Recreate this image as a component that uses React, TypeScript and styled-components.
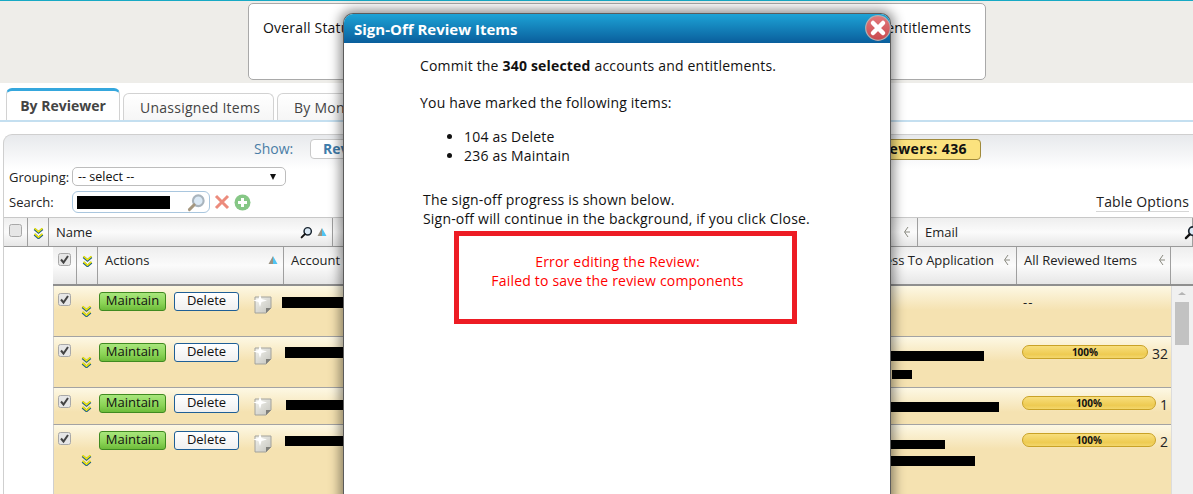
import * as React from 'react'
import styled, { createGlobalStyle } from 'styled-components'

const font = `'Open Sans', 'DejaVu Sans', sans-serif`

const GlobalStyle = createGlobalStyle`
  html, body {
    margin: 0;
    padding: 0;
    background: #fff;
  }
  body {
    font-family: ${font};
    font-size: 13px;
    color: #111;
  }
  svg {
    display: block;
  }
`

const Page = styled.div`
  position: relative;
  width: 1193px;
  height: 494px;
  overflow: hidden;
  background: #fff;
`

const TopBand = styled.div`
  height: 83px;
  box-sizing: border-box;
  padding: 3px 207px 0 248px;
  background: #eeede9;
  border-top: 1px solid #17a9c4;
`

const StatsBox = styled.div`
  display: flex;
  justify-content: space-between;
  box-sizing: border-box;
  height: 77px;
  margin-top: -1px;
  padding: 14px 14px 0 14px;
  background: #fff;
  border: 1px solid #a9a9a9;
  border-radius: 5px;
  font-size: 14px;
  letter-spacing: 0.2px;
`

const TabBar = styled.div`
  display: flex;
  align-items: flex-end;
  gap: 3px;
  height: 39px;
  box-sizing: border-box;
  padding-left: 6px;
  border-bottom: 2px solid #c4dff0;
`

const Tab = styled.div<{ $active?: boolean; $width: number }>`
  box-sizing: border-box;
  width: ${p => p.$width}px;
  height: ${p => (p.$active ? 32 : 27)}px;
  padding-top: ${p => (p.$active ? 5 : 4)}px;
  text-align: ${p => (p.$active ? 'center' : 'left')};
  padding-left: ${p => (p.$active ? 0 : 16)}px;
  font-size: 14px;
  font-weight: ${p => (p.$active ? 700 : 400)};
  letter-spacing: ${p => (p.$active ? 0 : 0.25)}px;
  color: #444;
  white-space: nowrap;
  background: ${p => (p.$active ? '#fff' : 'linear-gradient(#fff, #f6f6f6)')};
  border: 1px solid #d2d2d2;
  border-bottom: 0;
  border-top: ${p => (p.$active ? '3px solid #35a7dd' : '1px solid #d2d2d2')};
  border-radius: 6px 6px 0 0;
`

const Panel = styled.div`
  margin: 12px 0 0 3px;
  border-left: 1px solid #cfcfcf;
  border-top: 1px solid #cfcfcf;
  border-top-left-radius: 9px;
  background: linear-gradient(#e7e9ec 0, #fff 34px);
  height: 400px;
`

const ShowRow = styled.div`
  display: flex;
  align-items: center;
  height: 20px;
  padding: 4px 212px 0 250px;
`

const ShowLabel = styled.span`
  width: 56px;
  margin-top: -1px;
  font-size: 14px;
  color: #4a7da6;
`

const ShowButton = styled.div`
  box-sizing: border-box;
  width: 120px;
  height: 20px;
  padding-left: 12px;
  font-size: 14px;
  font-weight: 700;
  line-height: 18px;
  color: #3f7cab;
  background: #fff;
  border: 1px solid #c9c9c9;
  border-radius: 4px;
`

const Badge = styled.div`
  margin-left: auto;
  box-sizing: border-box;
  height: 21px;
  padding: 0 13px 0 10px;
  font-size: 14px;
  font-weight: 700;
  letter-spacing: 0.4px;
  line-height: 18px;
  background: #fbe27e;
  border: 1px solid #a08a3c;
  border-radius: 4px;
`

const FilterRow = styled.div<{ $top: number }>`
  display: flex;
  align-items: center;
  margin-top: ${p => p.$top}px;
  padding-left: 5px;
`

const FilterLabel = styled.span`
  width: 63px;
  font-size: 13px;
  color: #222;
`

const SelectBox = styled.div`
  display: flex;
  align-items: center;
  justify-content: space-between;
  box-sizing: border-box;
  width: 214px;
  height: 19px;
  padding: 0 5px;
  font-size: 12.5px;
  background: #fff;
  border: 1px solid #bdbdbd;
  border-radius: 5px;
`

const Caret = styled.span`
  width: 0;
  height: 0;
  margin-right: 4px;
  border-left: 3px solid transparent;
  border-right: 3px solid transparent;
  border-top: 6px solid #111;
`

const SearchBox = styled.div`
  display: flex;
  align-items: center;
  justify-content: space-between;
  box-sizing: border-box;
  width: 138px;
  height: 22px;
  padding: 0 3px 0 4px;
  background: #fff;
  border: 1px solid #a9c6de;
  border-radius: 6px;
`

const Redact = styled.div<{ $w: number; $h: number; $left?: number; $top?: number }>`
  width: ${p => p.$w}px;
  height: ${p => p.$h}px;
  margin-left: ${p => p.$left ?? 0}px;
  margin-top: ${p => p.$top ?? 0}px;
  background: #000;
`

const FilterIcons = styled.div`
  display: flex;
  align-items: center;
  gap: 4px;
  margin-left: 4px;
`

const TableOptions = styled.span`
  margin-left: auto;
  margin-right: 4px;
  font-size: 14px;
  letter-spacing: 0.15px;
  color: #222;
  border-bottom: 1px solid #d6d6d6;
`

const headGradient = 'linear-gradient(#eeeeee 0, #fbfbfb 50%, #e6e6e6 100%)'

const OuterHead = styled.div`
  display: grid;
  grid-template-columns: 24px 21px 284px 585px 1fr;
  height: 30px;
  margin-top: 4px;
  box-sizing: border-box;
  background: ${headGradient};
  border-top: 1px solid #c8c8c8;
  border-bottom: 1px solid #9a9a9a;
`

const InnerWrap = styled.div`
  margin-left: 49px;
`

const grid = '24px 21px 186px 596px 137px 154px 22px'

const InnerHead = styled.div`
  display: grid;
  grid-template-columns: ${grid};
  height: 39px;
  box-sizing: border-box;
  background: ${headGradient};
  border-bottom: 2px solid #8f8f8f;
`

const HeadCell = styled.div<{ $end?: boolean; $pad?: number; $bottom?: number }>`
  display: flex;
  align-items: center;
  justify-content: ${p => (p.$end ? 'flex-end' : 'space-between')};
  box-sizing: border-box;
  padding: 0 ${p => p.$pad ?? 5}px ${p => p.$bottom ?? 0}px 7px;
  font-size: 13px;
  color: #222;
  white-space: nowrap;
  border-right: 1px solid #9f9f9f;
`

const IconCell = styled.div<{ $top: number }>`
  display: flex;
  justify-content: center;
  align-items: flex-start;
  box-sizing: border-box;
  padding-top: ${p => p.$top}px;
  border-right: 1px solid #9f9f9f;
`

const HeadIcons = styled.span<{ $gap?: number }>`
  display: inline-flex;
  align-items: center;
  gap: ${p => p.$gap ?? 4}px;
`

const EmailLens = styled.span`
  display: inline-flex;
  margin-right: -7px;
`

const Body = styled.div`
  display: flex;
`

const Rows = styled.div`
  width: 1118px;
`

const Row = styled.div<{ $h: number }>`
  display: grid;
  grid-template-columns: 24px 21px 186px 596px 137px 154px;
  box-sizing: border-box;
  height: ${p => p.$h}px;
  background: linear-gradient(#fdf8e4 0, #f5e2b1 24px);
  border-bottom: 1px solid #a3a3a3;
  border-left: 1px solid #cfcfcf;
`

const CheckCell = styled.div`
  padding: 7px 0 0 4px;
`

const ChevCell = styled.div<{ $top: number }>`
  padding: ${p => p.$top}px 0 0 3px;
`

const ActionsCell = styled.div`
  display: flex;
  align-items: flex-start;
  padding-top: 6px;
`

const Button = styled.div<{ $primary?: boolean }>`
  box-sizing: border-box;
  width: ${p => (p.$primary ? 67 : 65)}px;
  height: 19px;
  margin-right: ${p => (p.$primary ? 8 : 13)}px;
  font-size: 13px;
  line-height: 15px;
  text-align: center;
  color: #111;
  background: ${p =>
    p.$primary ? 'linear-gradient(#a8e67c, #8bd456 60%, #6dbb3a)' : 'linear-gradient(#fff, #f0f0f0)'};
  border: 1px solid ${p => (p.$primary ? '#3f8a20' : '#1f5f96')};
  border-radius: 3px;
`

const NoteWrap = styled.div`
  padding-top: 2px;
`

const ReviewedCell = styled.div`
  display: flex;
  align-items: flex-start;
  padding: 8px 0 0 4px;
  font-size: 13px;
`

const Dashes = styled.span`
  margin-top: -1px;
  margin-left: 1px;
  font-size: 13px;
  letter-spacing: 1px;
  color: #222;
`

const Progress = styled.div<{ $w: number }>`
  box-sizing: border-box;
  width: ${p => p.$w}px;
  height: 14px;
  margin-right: 4px;
  font-size: 10px;
  font-weight: 700;
  line-height: 12px;
  text-align: center;
  color: #111;
  background: linear-gradient(#f8de7c, #eecb52 70%, #f3d76c);
  border: 1px solid #c9a227;
  border-radius: 7px;
`

const Count = styled.span`
  margin-top: -1px;
  font-size: 14px;
  color: #222;
`

const ScrollTrack = styled.div`
  box-sizing: border-box;
  width: 22px;
  height: 220px;
  padding: 6px 4px 0 3px;
  background: #f0f0f0;
  border-left: 1px solid #dcdcdc;
`

const ScrollArrow = styled.div`
  width: 0;
  height: 0;
  margin: 0 auto 7px;
  border-left: 4px solid transparent;
  border-right: 4px solid transparent;
  border-bottom: 3px solid #b5b5b5;
`

const ScrollThumb = styled.div`
  height: 43px;
  background: #c2c2c2;
`

const Modal = styled.div`
  position: absolute;
  left: 343px;
  top: 13px;
  box-sizing: border-box;
  width: 548px;
  height: 520px;
  background: #fff;
  border: 1px solid #5b5b5b;
  border-bottom: 0;
  border-radius: 10px 10px 0 0;
  box-shadow: 0 0 12px 3px rgba(0, 0, 0, 0.45);
`

const ModalHeader = styled.div`
  box-sizing: border-box;
  height: 29px;
  padding: 5px 0 0 10px;
  font-size: 15px;
  font-weight: 700;
  color: #fff;
  background: linear-gradient(#1da3d6, #0a5e9c);
  border-radius: 9px 9px 0 0;
`

const CloseButton = styled.div`
  position: absolute;
  right: -1px;
  top: 1px;
  width: 26px;
  height: 26px;
`

const ModalBody = styled.div`
  padding: 13px 0 0 76px;
  font-size: 14px;
  letter-spacing: 0.19px;
  line-height: 19px;
`

const Para = styled.div<{ $top?: number; $left?: number }>`
  margin-top: ${p => p.$top ?? 0}px;
  margin-left: ${p => p.$left ?? 0}px;
`

const ItemList = styled.ul`
  margin: 15px 0 0;
  padding: 0 0 0 44px;
`

const ErrorBox = styled.div`
  box-sizing: border-box;
  width: 343px;
  height: 93px;
  margin: 3px 0 0 34px;
  padding: 16px 16px 0 0;
  text-align: center;
  color: #f00;
  border: 5px solid #ed1c24;
`

const Check = ({ on }: { on?: boolean }) => (
  <svg width="13" height="13" viewBox="0 0 13 13">
    <rect x="0.5" y="0.5" width="12" height="12" rx="2" fill="#e6e6e6" stroke="#a8a8a8" />
    {on && <path d="M3 6.5 L5.5 9.5 L10 3" fill="none" stroke="#444" strokeWidth="2" />}
  </svg>
)

const Chevrons = () => (
  <svg width="11" height="12" viewBox="0 0 11 12">
    <g fill="none">
      <path d="M1.5 2 L5.5 5.5 L9.5 2 M1.5 7.5 L5.5 11 L9.5 7.5" stroke="#1c5f86" strokeWidth="2.4" />
      <path d="M1.5 1.2 L5.5 4.7 L9.5 1.2 M1.5 6.7 L5.5 10.2 L9.5 6.7" stroke="#f7ea00" strokeWidth="1.5" />
    </g>
  </svg>
)

const SortUp = () => (
  <svg width="10" height="10" viewBox="0 0 10 10">
    <polygon points="5,1 0.5,9 5,9" fill="#9a9282" />
    <polygon points="5,1 9.5,9 5,9" fill="#4fc4f3" />
  </svg>
)

const Lens = ({ tone, size }: { tone: 'dark' | 'light'; size: number }) => (
  <svg width={size} height={size} viewBox="0 0 16 16">
    <circle
      cx="9.5"
      cy="6.5"
      r="4.5"
      fill="#dbe9f5"
      stroke={tone === 'dark' ? '#1a2530' : '#a9b4bd'}
      strokeWidth="1.8"
    />
    <path d="M6 10 L2 14" stroke={tone === 'dark' ? '#111' : '#a5977f'} strokeWidth="2.4" strokeLinecap="round" />
  </svg>
)

const Resize = () => (
  <svg width="7" height="12" viewBox="0 0 7 12">
    <path d="M5 1 L1.5 6 L5 11" fill="none" stroke="#8a8a80" />
    <path d="M2 6 H7" stroke="#8a8a80" />
  </svg>
)

const Cross = () => (
  <svg width="16" height="16" viewBox="0 0 16 16">
    <path d="M2 2 L14 14 M14 2 L2 14" stroke="#ec8b7c" strokeWidth="3" />
  </svg>
)

const Plus = () => (
  <svg width="17" height="17" viewBox="0 0 17 17">
    <circle cx="8.5" cy="8.5" r="8" fill="#86c786" />
    <path d="M8.5 4 V13 M4 8.5 H13" stroke="#fff" strokeWidth="3" />
  </svg>
)

const Note = () => (
  <svg width="20" height="20" viewBox="0 0 20 20">
    <defs>
      <linearGradient id="noteFill" x1="0" y1="0" x2="1" y2="1">
        <stop offset="0" stopColor="#f2f2ec" />
        <stop offset="1" stopColor="#c4c4be" />
      </linearGradient>
    </defs>
    <path d="M3 3 H19 V14 L14 19 H3 Z" fill="url(#noteFill)" stroke="#a2a29c" />
    <path d="M14 19 V14 H19 Z" fill="#7f7f7a" />
    <path d="M8 0 L9.5 5 L15 6.5 L9.5 8 L8 13 L6.5 8 L1 6.5 L6.5 5 Z" fill="#fff" />
  </svg>
)

const CloseIcon = () => (
  <svg width="26" height="26" viewBox="0 0 26 26">
    <defs>
      <linearGradient id="closeFill" x1="0" y1="0" x2="0" y2="1">
        <stop offset="0" stopColor="#e27a7c" />
        <stop offset="1" stopColor="#c9494e" />
      </linearGradient>
    </defs>
    <circle cx="13" cy="13" r="12.3" fill="url(#closeFill)" stroke="#b3aeb0" strokeWidth="1.2" />
    <path d="M8 8 L18 18 M18 8 L8 18" stroke="#fff" strokeWidth="4.5" strokeLinecap="round" />
  </svg>
)

interface ReviewRow {
  height: number
  chevTop: number
  bar: { w: number; h: number; left: number; top: number }
  access: { w: number; h: number; left: number; top: number }[]
  progress?: { w: number; count: string }
}

const reviewRows: ReviewRow[] = [
  { height: 51, chevTop: 19, bar: { w: 63, h: 11, left: -3, top: 11 }, access: [] },
  {
    height: 51,
    chevTop: 19,
    bar: { w: 60, h: 11, left: 0, top: 10 },
    access: [
      { w: 103, h: 10, left: 0, top: 14 },
      { w: 20, h: 9, left: 11, top: 9 },
    ],
    progress: { w: 126, count: '32' },
  },
  {
    height: 37,
    chevTop: 12,
    bar: { w: 59, h: 10, left: 1, top: 12 },
    access: [{ w: 118, h: 10, left: 0, top: 14 }],
    progress: { w: 134, count: '1' },
  },
  {
    height: 70,
    chevTop: 29,
    bar: { w: 60, h: 10, left: 0, top: 11 },
    access: [
      { w: 64, h: 9, left: 0, top: 15 },
      { w: 94, h: 10, left: 0, top: 7 },
    ],
    progress: { w: 134, count: '2' },
  },
]

export default function App() {
  return (
    <Page>
      <GlobalStyle />
      <TopBand>
        <StatsBox>
          <span>Overall Status</span>
          <span>entitlements</span>
        </StatsBox>
      </TopBand>
      <TabBar>
        <Tab $active $width={114}>By Reviewer</Tab>
        <Tab $width={151}>Unassigned Items</Tab>
        <Tab $width={150}>By Month</Tab>
      </TabBar>
      <Panel>
        <ShowRow>
          <ShowLabel>Show:</ShowLabel>
          <ShowButton>Reviewed</ShowButton>
          <Badge>Reviewers: 436</Badge>
        </ShowRow>
        <FilterRow $top={8}>
          <FilterLabel>Grouping:</FilterLabel>
          <SelectBox>
            <span>-- select --</span>
            <Caret />
          </SelectBox>
        </FilterRow>
        <FilterRow $top={5}>
          <FilterLabel>Search:</FilterLabel>
          <SearchBox>
            <Redact $w={93} $h={13} />
            <Lens tone="light" size={19} />
          </SearchBox>
          <FilterIcons>
            <Cross />
            <Plus />
          </FilterIcons>
          <TableOptions>Table Options</TableOptions>
        </FilterRow>
        <OuterHead>
          <IconCell $top={6}>
            <Check />
          </IconCell>
          <IconCell $top={9}>
            <Chevrons />
          </IconCell>
          <HeadCell>
            Name
            <HeadIcons>
              <Lens tone="dark" size={13} />
              <SortUp />
            </HeadIcons>
          </HeadCell>
          <HeadCell $end $pad={7}>
            <Resize />
          </HeadCell>
          <HeadCell $pad={0}>
            Email
            <EmailLens>
              <Lens tone="dark" size={15} />
            </EmailLens>
          </HeadCell>
        </OuterHead>
        <InnerWrap>
          <InnerHead>
            <IconCell $top={6}>
              <Check on />
            </IconCell>
            <IconCell $top={8}>
              <Chevrons />
            </IconCell>
            <HeadCell $bottom={12}>
              Actions
              <SortUp />
            </HeadCell>
            <HeadCell $bottom={12}>Account</HeadCell>
            <HeadCell $end $pad={6} $bottom={12}>
              <HeadIcons $gap={9}>
                Access To Application
                <Resize />
              </HeadIcons>
            </HeadCell>
            <HeadCell $bottom={12}>
              All Reviewed Items
              <Resize />
            </HeadCell>
            <span />
          </InnerHead>
          <Body>
            <Rows>
              {reviewRows.map((row, i) => (
                <Row key={i} $h={row.height}>
                  <CheckCell>
                    <Check on />
                  </CheckCell>
                  <ChevCell $top={row.chevTop}>
                    <Chevrons />
                  </ChevCell>
                  <ActionsCell>
                    <Button $primary>Maintain</Button>
                    <Button>Delete</Button>
                    <NoteWrap>
                      <Note />
                    </NoteWrap>
                  </ActionsCell>
                  <div>
                    <Redact $w={row.bar.w} $h={row.bar.h} $left={row.bar.left} $top={row.bar.top} />
                  </div>
                  <div>
                    {row.access.map((a, j) => (
                      <Redact key={j} $w={a.w} $h={a.h} $left={a.left} $top={a.top} />
                    ))}
                  </div>
                  <ReviewedCell>
                    {row.progress ? (
                      <>
                        <Progress $w={row.progress.w}>100%</Progress>
                        <Count>{row.progress.count}</Count>
                      </>
                    ) : (
                      <Dashes>--</Dashes>
                    )}
                  </ReviewedCell>
                </Row>
              ))}
            </Rows>
            <ScrollTrack>
              <ScrollArrow />
              <ScrollThumb />
            </ScrollTrack>
          </Body>
        </InnerWrap>
      </Panel>
      <Modal>
        <ModalHeader>Sign-Off Review Items</ModalHeader>
        <CloseButton>
          <CloseIcon />
        </CloseButton>
        <ModalBody>
          <Para>
            Commit the <b>340 selected</b> accounts and entitlements.
          </Para>
          <Para $top={18}>You have marked the following items:</Para>
          <ItemList>
            <li>104 as Delete</li>
            <li>236 as Maintain</li>
          </ItemList>
          <Para $top={25} $left={3}>The sign-off progress is shown below.</Para>
          <Para $left={3}>Sign-off will continue in the background, if you click Close.</Para>
          <ErrorBox>
            Error editing the Review:
            <br />
            Failed to save the review components
          </ErrorBox>
        </ModalBody>
      </Modal>
    </Page>
  )
}
